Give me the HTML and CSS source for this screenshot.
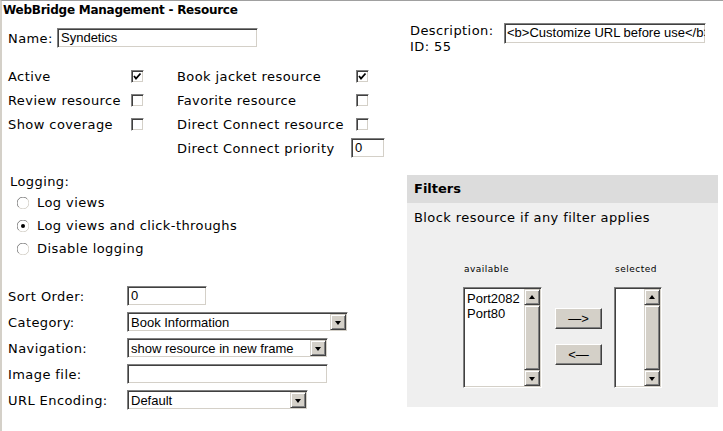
FILE: index.html
```html
<!DOCTYPE html>
<html>
<head>
<meta charset="utf-8">
<title>WebBridge Management - Resource</title>
<link rel="stylesheet" href="styles.css">
</head>
<body>
<div class="frame">
  <div class="title">WebBridge Management - Resource</div>
  <div class="main">
    <div class="left">
      <div class="name-row">
        <span class="lbl-name">Name:</span>
        <span class="field w-name">Syndetics</span>
      </div>

      <div class="flags">
        <span>Active</span>
        <span class="cb"><svg viewBox="0 0 13 13" width="13" height="13"><polyline points="3,6 5,8.5 9.5,3.5" fill="none" stroke="#000" stroke-width="1.8"/></svg></span>
        <span></span>
        <span>Book jacket resource</span>
        <span class="cb cb-r"><svg viewBox="0 0 13 13" width="13" height="13"><polyline points="3,6 5,8.5 9.5,3.5" fill="none" stroke="#000" stroke-width="1.8"/></svg></span>

        <span>Review resource</span>
        <span class="cb"></span>
        <span></span>
        <span>Favorite resource</span>
        <span class="cb cb-r"></span>

        <span>Show coverage</span>
        <span class="cb"></span>
        <span></span>
        <span>Direct Connect resource</span>
        <span class="cb cb-r"></span>

        <span class="prio-lbl">Direct Connect priority</span>
        <span class="field w-prio">0</span>
      </div>

      <div class="logging">
        <div class="log-title">Logging:</div>
        <div class="radio-row first">
          <svg class="radio" viewBox="0 0 12 12" width="12" height="12"><circle cx="6" cy="6" r="5.5" fill="#fff"/><path d="M1.8 10.2 A5.5 5.5 0 0 1 10.2 1.8" fill="none" stroke="#808080" stroke-width="1"/><path d="M10.2 1.8 A5.5 5.5 0 0 1 1.8 10.2" fill="none" stroke="#d4d0c8" stroke-width="1"/></svg>
          <span>Log views</span>
        </div>
        <div class="radio-row">
          <svg class="radio" viewBox="0 0 12 12" width="12" height="12"><circle cx="6" cy="6" r="5.5" fill="#fff"/><path d="M1.8 10.2 A5.5 5.5 0 0 1 10.2 1.8" fill="none" stroke="#808080" stroke-width="1"/><path d="M10.2 1.8 A5.5 5.5 0 0 1 1.8 10.2" fill="none" stroke="#d4d0c8" stroke-width="1"/><circle cx="6" cy="6" r="2" fill="#000"/></svg>
          <span>Log views and click-throughs</span>
        </div>
        <div class="radio-row">
          <svg class="radio" viewBox="0 0 12 12" width="12" height="12"><circle cx="6" cy="6" r="5.5" fill="#fff"/><path d="M1.8 10.2 A5.5 5.5 0 0 1 10.2 1.8" fill="none" stroke="#808080" stroke-width="1"/><path d="M10.2 1.8 A5.5 5.5 0 0 1 1.8 10.2" fill="none" stroke="#d4d0c8" stroke-width="1"/></svg>
          <span>Disable logging</span>
        </div>
      </div>

      <div class="form">
        <span>Sort Order:</span>
        <span class="field w-sort">0</span>

        <span>Category:</span>
        <span class="select w-cat"><span class="val">Book Information</span><span class="arrow"><i class="tri"></i></span></span>

        <span>Navigation:</span>
        <span class="select w-nav"><span class="val">show resource in new frame</span><span class="arrow"><i class="tri"></i></span></span>

        <span>Image file:</span>
        <span class="field w-img"></span>

        <span>URL Encoding:</span>
        <span class="select w-enc"><span class="val">Default</span><span class="arrow"><i class="tri"></i></span></span>
      </div>
    </div>

    <div class="right">
      <div class="desc">
        <div class="desc-lbl">Description:<br>ID: 55</div>
        <span class="field w-desc">&lt;b&gt;Customize URL before use&lt;/b&gt;</span>
      </div>

      <div class="filters">
        <div class="filters-head">Filters</div>
        <div class="note">Block resource if any filter applies</div>
        <div class="picker">
          <div class="pick-col">
            <div class="cap">available</div>
            <div class="listbox w-avail">
              <div class="items"><div>Port2082</div><div>Port80</div></div>
              <div class="scroll"><span class="sbtn"><i class="tri up"></i></span><span class="thumb"></span><span class="sbtn"><i class="tri"></i></span></div>
            </div>
          </div>
          <div class="btns">
            <button class="mv">&mdash;&gt;</button>
            <button class="mv">&lt;&mdash;</button>
          </div>
          <div class="pick-col">
            <div class="cap">selected</div>
            <div class="listbox w-sel">
              <div class="items"></div>
              <div class="scroll"><span class="sbtn"><i class="tri up"></i></span><span class="thumb"></span><span class="sbtn"><i class="tri"></i></span></div>
            </div>
          </div>
        </div>
      </div>
    </div>
  </div>
</div>
</body>
</html>
```

FILE: styles.css
```css
* { box-sizing: border-box; }

body {
  margin: 0;
  font-family: "DejaVu Sans", Verdana, sans-serif;
  font-size: 13px;
  letter-spacing: 0.42px;
  color: #000;
  background: #fff;
}

.frame {
  border-top: 1px solid #a0a0a0;
  border-left: 2px solid #d4d0c8;
  height: 431px;
}

.title {
  font-weight: bold;
  font-size: 12px;
  letter-spacing: -0.25px;
  line-height: 18px;
  padding-left: 1px;
}

.main { display: flex; }

.left { width: 405px; padding-left: 6px; }
.right { width: 316px; }

/* generic inset text field */
.field {
  display: block;
  height: 20px;
  background: #fff;
  border: 1px solid;
  border-color: #808080 #fff #fff #808080;
  box-shadow: inset 1px 1px 0 #404040, inset -1px -1px 0 #d4d0c8;
  font-family: "Liberation Sans", Arial, sans-serif;
  font-size: 13px;
  letter-spacing: 0;
  line-height: 17px;
  padding: 0 0 0 3px;
  white-space: nowrap;
  overflow: hidden;
}

.name-row {
  display: flex;
  align-items: center;
  margin-top: 9px;
  height: 20px;
}
.lbl-name { width: 49px; }
.w-name { width: 201px; }

.flags {
  display: grid;
  grid-template-columns: 123px 13px 33px 174px 40px;
  grid-auto-rows: 24px;
  align-items: center;
  margin-top: 16px;
}
.prio-lbl { grid-column: 4; }
.w-prio { width: 34px; }

.cb {
  display: block;
  width: 13px;
  height: 13px;
  background: #fff;
  border: 1px solid;
  border-color: #808080 #fff #fff #808080;
  box-shadow: inset 1px 1px 0 #404040, inset -1px -1px 0 #d4d0c8;
  position: relative;
}
.cb svg { position: absolute; left: -1px; top: -1px; }
.cb-r { margin-left: 5px; }

.logging { margin-top: 14px; padding-left: 2px; }
.log-title { line-height: 16px; }
.radio-row {
  display: flex;
  align-items: center;
  height: 23px;
  padding-left: 7px;
}
.radio-row.first { margin-top: 1px; }
.radio { margin-right: 8px; flex: none; }

.form {
  display: grid;
  grid-template-columns: 119px auto;
  grid-auto-rows: 26px;
  align-items: center;
  justify-items: start;
  margin-top: 23px;
}
.w-sort { width: 80px; }
.w-cat { width: 221px; }
.w-nav { width: 201px; }
.w-img { width: 201px; }
.w-enc { width: 181px; }

.select {
  display: flex;
  height: 20px;
  background: #fff;
  border: 1px solid;
  border-color: #808080 #fff #fff #808080;
  box-shadow: inset 1px 1px 0 #404040, inset -1px -1px 0 #d4d0c8;
  padding: 1px;
}
.select .val {
  flex: 1;
  font-family: "Liberation Sans", Arial, sans-serif;
  font-size: 13px;
  letter-spacing: 0;
  line-height: 17px;
  padding-left: 2px;
  white-space: nowrap;
  overflow: hidden;
}
.select .arrow,
.sbtn {
  width: 16px;
  height: 16px;
  flex: none;
  background: #d4d0c8;
  border: 1px solid;
  border-color: #d4d0c8 #404040 #404040 #d4d0c8;
  box-shadow: inset 1px 1px 0 #fff, inset -1px -1px 0 #808080;
  display: flex;
  align-items: center;
  justify-content: center;
}
.tri {
  display: block;
  width: 0;
  height: 0;
  border-left: 3.5px solid transparent;
  border-right: 3.5px solid transparent;
  border-top: 4px solid #000;
  margin-top: 1px;
}
.tri.up {
  border-top: 0;
  border-bottom: 4px solid #000;
  margin-top: -1px;
}

.desc {
  display: flex;
  align-items: flex-start;
  margin-top: 4px;
  padding-left: 3px;
}
.desc-lbl { width: 94px; line-height: 16px; }
.w-desc { width: 202px; height: 21px; line-height: 18px; padding-left: 2px; }

.filters {
  width: 311px;
  height: 232px;
  background: #efefef;
  margin-top: 120px;
}
.filters-head {
  height: 28px;
  line-height: 28px;
  background: #dcdcdc;
  font-weight: bold;
  letter-spacing: 0;
  padding-left: 7px;
}
.note {
  margin-top: 7px;
  line-height: 16px;
  padding-left: 7px;
}
.picker {
  display: flex;
  align-items: flex-start;
  margin-top: 37px;
  padding-left: 56px;
}
.cap {
  font-size: 9px;
  letter-spacing: 0.5px;
  line-height: 12px;
  margin-bottom: 12px;
  padding-left: 1px;
}
.listbox {
  display: flex;
  height: 101px;
  background: #fff;
  border: 1px solid;
  border-color: #808080 #fff #fff #808080;
  box-shadow: inset 1px 1px 0 #404040, inset -1px -1px 0 #d4d0c8;
  padding: 1px;
}
.w-avail { width: 79px; }
.w-sel { width: 48px; }
.items {
  flex: 1;
  padding: 2px 0 0 2px;
  font-family: "Liberation Sans", Arial, sans-serif;
  font-size: 13px;
  letter-spacing: 0;
  line-height: 15px;
}
.scroll {
  width: 16px;
  display: flex;
  flex-direction: column;
}
.thumb {
  flex: 1;
  background: #d4d0c8;
  border: 1px solid;
  border-color: #d4d0c8 #404040 #404040 #d4d0c8;
  box-shadow: inset 1px 1px 0 #fff, inset -1px -1px 0 #808080;
}

.btns {
  display: flex;
  flex-direction: column;
  gap: 15px;
  margin: 45px 12px 0 13px;
}
.mv {
  width: 47px;
  height: 21px;
  padding: 0;
  background: #d4d0c8;
  border: 1px solid;
  border-color: #fff #404040 #404040 #fff;
  box-shadow: inset -1px -1px 0 #808080;
  font-family: "Liberation Sans", Arial, sans-serif;
  font-size: 13px;
  letter-spacing: 0;
  color: #000;
}
```
